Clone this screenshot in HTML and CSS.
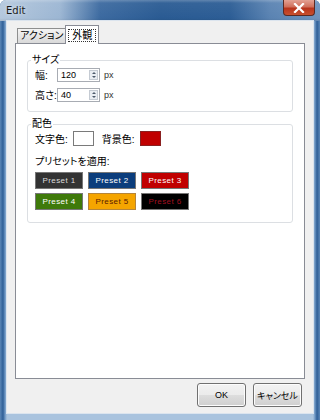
FILE: index.html
```html
<!DOCTYPE html>
<html lang="ja">
<head>
  <meta charset="UTF-8">
  <title>Edit</title>
  <link rel="stylesheet" href="styles.css">
</head>
<body>

  <div class="window">
    <div class="titlebar">
      <span class="title">Edit</span>
      <div class="close">
        <svg width="12" height="10" viewBox="0 0 12 10"><path d="M2 1 L10 9 M10 1 L2 9" stroke="#fff" stroke-width="2.2" stroke-linecap="square"/></svg>
      </div>
    </div>

    <div class="client">
      <div class="tabs">
        <div class="tab">アクション</div>
        <div class="tab active"><span class="focus">外観</span></div>
      </div>

      <div class="panel">
        <fieldset class="group">
          <legend>サイズ</legend>
          <div class="size-grid">
            <span>幅:</span>
            <div class="num"><span class="val">120</span><span class="spin"><i class="up"></i><i class="down"></i></span></div>
            <span class="unit">px</span>

            <span>高さ:</span>
            <div class="num"><span class="val">40</span><span class="spin"><i class="up"></i><i class="down"></i></span></div>
            <span class="unit">px</span>
          </div>
        </fieldset>

        <fieldset class="group colors">
          <legend>配色</legend>
          <div class="swatches">
            <span class="sw-label">文字色:</span>
            <span class="swatch white"></span>
            <span class="sw-label second">背景色:</span>
            <span class="swatch red"></span>
          </div>
          <div class="preset-label">プリセットを適用:</div>
          <div class="presets">
            <button class="preset p1">Preset 1</button>
            <button class="preset p2">Preset 2</button>
            <button class="preset p3">Preset 3</button>
            <button class="preset p4">Preset 4</button>
            <button class="preset p5">Preset 5</button>
            <button class="preset p6">Preset 6</button>
          </div>
        </fieldset>
      </div>

      <div class="buttons">
        <button class="btn">OK</button>
        <button class="btn">キャンセル</button>
      </div>
    </div>
  </div>

</body>
</html>
```

FILE: styles.css
```css
body {
  margin: 0;
  font-family: "Liberation Sans", "Noto Sans CJK JP", sans-serif;
  font-size: 10px;
  font-feature-settings: "palt";
  color: #000;
}
.window {
  width: 320px;
  height: 420px;
  box-sizing: border-box;
  padding: 0 7px 7px 7px;
  background: linear-gradient(90deg, #5b86b6 0, #2f5f97 3px, #6d96c3 5px, #a9c3de 7px, #a9c3de calc(100% - 7px), #6d96c3 calc(100% - 5px), #2f5f97 calc(100% - 3px), #5b86b6 100%);
  border-radius: 6px 6px 0 0;
  display: flex;
  flex-direction: column;
}

/* title bar */
.titlebar {
  height: 21px;
  margin: 0 -7px;
  padding: 0 6px 0 6px;
  display: flex;
  align-items: flex-start;
  justify-content: space-between;
  border-radius: 6px 6px 0 0;
  background:
    linear-gradient(180deg, rgba(255,255,255,0.25) 0, rgba(255,255,255,0.05) 3px, rgba(0,0,0,0) 18px, rgba(0,0,0,0.08) 100%),
    linear-gradient(90deg, #b4c8dd 0, #9cb6d3 60px, #3c6aa0 100px, #2a5b93 160px, #2c5d95 230px, #5a83b2 270px, #6f94bf 320px);
}
.title {
  font-family: "DejaVu Sans", sans-serif;
  font-size: 10px;
  color: #1a1a1a;
  margin-top: 5px;
  text-shadow: 0 0 4px rgba(255,255,255,0.8);
}
.close {
  width: 32px;
  height: 16px;
  margin-right: -1px;
  box-sizing: border-box;
  border: 1px solid #5a2a24;
  border-top: none;
  border-radius: 0 0 4px 4px;
  background: linear-gradient(180deg, #e3a193 0, #d0705c 45%, #b8341c 55%, #c8502f 100%);
  display: flex;
  align-items: center;
  justify-content: center;
}

/* client area */
.client {
  flex: 1;
  background: #f0f0f0;
  box-shadow: 0 0 0 1px #dbe4ee;
  padding: 4px 8px 6px 8px;
  display: flex;
  flex-direction: column;
}
.tabs {
  display: flex;
  align-items: flex-end;
  height: 19px;
  margin-bottom: -1px;
  padding-left: 2px;
}
.tab {
  height: 15px;
  box-sizing: border-box;
  padding: 1px 2px 0 2px;
  border: 1px solid #8e8f8f;
  border-bottom: none;
  background: linear-gradient(180deg, #f4f4f4 0, #e6e6e6 50%, #d9d9d9 100%);
  font-size: 10px;
  line-height: 12px;
  margin-bottom: 1px;
}
.tab.active {
  position: relative;
  z-index: 1;
  height: 19px;
  margin-bottom: 0;
  margin-left: -1px;
  padding: 3px 2px 0 2px;
  background: #fff;
  border-color: #898c95;
}
.focus {
  display: inline-block;
  border: 1px dotted #333;
  padding: 0 3px;
  line-height: 11px;
}
.panel {
  flex: 1;
  background: #fff;
  border: 1px solid #898c95;
  padding: 10px 11px;
}

/* group boxes */
.group {
  margin: 0;
  border: 1px solid #dcdfe3;
  border-radius: 3px;
  padding: 1px 8px 9px 7px;
}
.group legend {
  padding: 0 1px;
  margin-left: -4px;
  line-height: 12px;
}
.size-grid {
  display: grid;
  grid-template-columns: 22px 43px auto;
  row-gap: 5px;
  align-items: center;
  white-space: nowrap;
}
.num {
  height: 14px;
  box-sizing: border-box;
  border: 1px solid #a8acb3;
  display: flex;
  align-items: center;
  justify-content: space-between;
  padding: 0 1px 0 3px;
}
.val {
  font-size: 9px;
  line-height: 12px;
}
.spin {
  width: 9px;
  height: 10px;
  display: flex;
  flex-direction: column;
  justify-content: space-around;
  align-items: center;
  background: #e9edf2;
  border: 1px solid #c5cbd3;
  box-sizing: border-box;
}
.spin i {
  width: 0;
  height: 0;
  border-left: 2px solid transparent;
  border-right: 2px solid transparent;
}
.spin .up { border-bottom: 2px solid #4d5a6b; }
.spin .down { border-top: 2px solid #4d5a6b; }
.unit {
  margin-left: 4px;
  font-size: 9px;
  color: #333;
}

.colors {
  margin-top: 6px;
  padding-top: 1px;
  padding-bottom: 12px;
}
.swatches {
  display: flex;
  align-items: center;
  white-space: nowrap;
}
.sw-label { margin-right: 5px; }
.sw-label.second { margin-left: 8px; }
.swatch {
  width: 21px;
  height: 15px;
  box-sizing: border-box;
  border: 1px solid #7a7a7a;
}
.swatch.white { background: #fff; }
.swatch.red { background: #c00000; border-color: #8a2020; }
.preset-label {
  margin-top: 10px;
  line-height: 12px;
}
.presets {
  margin-top: 4px;
  display: grid;
  grid-template-columns: repeat(3, 48px);
  column-gap: 5px;
  row-gap: 4px;
}
.preset {
  height: 17px;
  margin: 0;
  padding: 0;
  border: 1px solid #777;
  font-family: "Liberation Sans", sans-serif;
  font-size: 8px;
  letter-spacing: 0.4px;
  color: #fff;
  white-space: nowrap;
}
.p1 { background: #333333; color: #dcdcdc; }
.p2 { background: #0b3d7c; }
.p3 { background: #c00000; }
.p4 { background: #3f7a0a; }
.p5 { background: #f5a500; color: #5a1a00; border-color: #b5853a; }
.p6 { background: #000; color: #a01020; }

/* dialog buttons */
.buttons {
  margin-top: 4px;
  padding-right: 3px;
  display: flex;
  justify-content: flex-end;
  gap: 7px;
}
.btn {
  width: 49px;
  height: 24px;
  margin: 0;
  padding: 0;
  border: 1px solid #707070;
  border-radius: 3px;
  background: linear-gradient(180deg, #f2f2f2 0, #ebebeb 50%, #dddddd 51%, #cfcfcf 100%);
  box-shadow: inset 0 0 0 1px #fcfcfc;
  font-family: "Liberation Sans", "Noto Sans CJK JP", sans-serif;
  font-feature-settings: "palt";
  font-size: 9px;
  color: #000;
  white-space: nowrap;
}
```
